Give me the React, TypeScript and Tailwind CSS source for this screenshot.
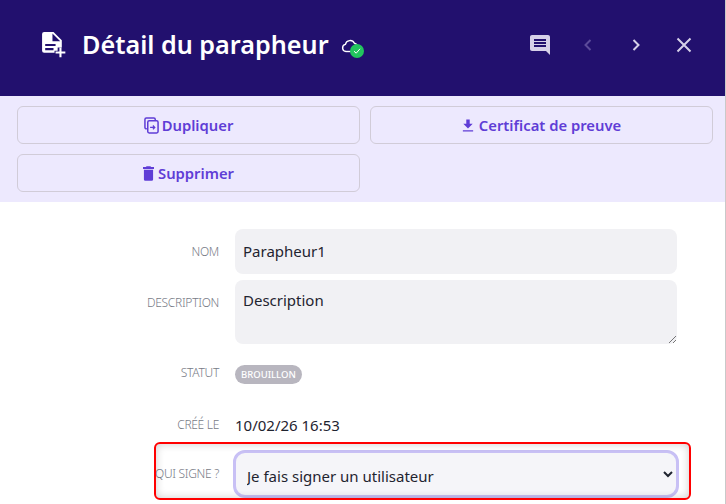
const font = { fontFamily: '"Noto Sans", "Open Sans", sans-serif' };

function FileSignIcon() {
  return (
    <svg width="25" height="27" viewBox="0 0 24 26" fill="#fff">
      <path d="M3 0h9l8 8v7h-4v3h-3v2H3a2 2 0 0 1-2-2V2a2 2 0 0 1 2-2zm8 1.500V9h7.500z" fillRule="evenodd" />
      <path d="M4 11.500h10v2H4zM4 15.500h8v2H4z" fill="#22106e" />
      <path d="M17.700 15h2v3.700h3.700v2h-3.700v3.700h-2v-3.700H14v-2h3.700z" />
    </svg>
  );
}

function CloudCheck() {
  return (
    <span className="relative inline-block w-[24px] h-[20px] ml-[12px] mt-[5px]">
      <svg width="20" height="16" viewBox="0 0 20 16" fill="none" stroke="#fff" strokeWidth="1.400" className="absolute left-0 top-0">
        <path d="M5 13.500a3.600 3.600 0 0 1-.6-7.100 4.800 4.800 0 0 1 9-1.200 3.800 3.800 0 0 1 3 5" />
        <path d="M5 13.500h6" />
      </svg>
      <span className="absolute left-[9px] top-[6px] w-[14px] h-[14px] rounded-full bg-[#22c55e] flex items-center justify-center">
        <svg width="8" height="8" viewBox="0 0 8 8" fill="none" stroke="#fff" strokeWidth="1">
          <path d="M1 4.200 3.200 6.200 7 1.800" />
        </svg>
      </span>
    </span>
  );
}

function ActionButton({ icon, label }: { icon: React.ReactNode; label: string }) {
  return (
    <button className="h-[38px] rounded-md border border-[#d1ccd8] flex items-center justify-center text-[#5f3dd6] text-[14.800px] font-semibold">
      {icon}
      <span>{label}</span>
    </button>
  );
}

function Row({ label, className, labelClass, children }: { label: string; className?: string; labelClass?: string; children: React.ReactNode }) {
  return (
    <div className={`flex ${className ?? ''}`}>
      <div className={`w-[219px] text-right text-[12px] tracking-[-0.3px] text-[#777b86] font-light uppercase shrink-0 ${labelClass ?? ''}`}>{label}</div>
      <div className="ml-4 w-[442px]">{children}</div>
    </div>
  );
}

export default function App() {
  return (
    <div className="w-[726px] h-[504px] overflow-hidden bg-white relative border-r border-[#c9c9c9]" style={font}>
      <header className="h-[96px] bg-[#22106e] flex items-center pl-[41px] pr-[29px] pb-[6px]">
        <FileSignIcon />
        <h1 className="ml-[16px] text-white text-[25.200px] font-semibold leading-none">Détail du parapheur</h1>
        <CloudCheck />
        <div className="ml-auto flex items-center text-[#d6d0e8] gap-[24px]">
          <svg width="24" height="24" viewBox="0 0 24 24" fill="currentColor">
            <path d="M21.990 4c0-1.100-.89-2-1.990-2H4c-1.100 0-2 .9-2 2v12c0 1.100.9 2 2 2h14l4 4-.01-18zM18 14H6v-2h12v2zm0-3H6V9h12v2zm0-3H6V6h12v2z" />
          </svg>
          <svg width="24" height="24" viewBox="0 0 24 24" fill="none" stroke="#5b4a9a" strokeWidth="2">
            <path d="M14.500 7 9.500 12l5 5" />
          </svg>
          <svg width="24" height="24" viewBox="0 0 24 24" fill="none" stroke="currentColor" strokeWidth="2">
            <path d="M9.500 7l5 5-5 5" />
          </svg>
          <svg width="24" height="24" viewBox="0 0 24 24" fill="none" stroke="currentColor" strokeWidth="2">
            <path d="M5.500 5.500l13 13M18.500 5.500l-13 13" />
          </svg>
        </div>
      </header>

      <div className="h-[106px] bg-[#ede9fe] pl-[17px] pr-[12px] pt-[10px] grid grid-cols-2 gap-x-[10px] gap-y-[10px] content-start">
        <ActionButton
          label="Dupliquer"
          icon={
            <svg width="15" height="17" viewBox="0 0 16 18" fill="none" stroke="currentColor" strokeWidth="1.600" className="mr-[3px]">
              <path d="M12 3V2.500A1.500 1.500 0 0 0 10.500 1H2.500A1.500 1.500 0 0 0 1 2.500V11a1.500 1.500 0 0 0 1.500 1.500H3" />
              <rect x="4" y="4" width="11" height="13" rx="1.500" />
              <path d="M6.500 11h5M9.500 9l2 2-2 2" strokeWidth="1.300" />
            </svg>
          }
        />
        <ActionButton
          label="Certificat de preuve"
          icon={
            <svg width="12" height="15" viewBox="0 0 14 16" fill="currentColor" className="mr-[5px]">
              <path d="M5 1h4v5h3.500L7 11.500 1.500 6H5zM1 13.500h12V15H1z" />
            </svg>
          }
        />
        <ActionButton
          label="Supprimer"
          icon={
            <svg width="11" height="15" viewBox="0 0 12 16" fill="currentColor" className="mr-[4px]">
              <path d="M4 0h4l1 1h3v2H0V1h3zM1 4h10v10.500A1.500 1.500 0 0 1 9.500 16h-7A1.500 1.500 0 0 1 1 14.500z" />
            </svg>
          }
        />
      </div>

      <div className="pt-[27px] text-[15px] text-[#1f2430]">
        <Row label="Nom" className="h-[51px]" labelClass="pt-[14px]">
          <div className="h-[45px] bg-[#f1f1f4] rounded-lg flex items-center px-2">Parapheur1</div>
        </Row>
        <Row label="Description" className="h-[65px]" labelClass="pt-[14px]">
          <div className="h-[64px] bg-[#f1f1f4] rounded-lg px-2 pt-[9px] leading-[22px] relative">
            Description
            <svg width="8" height="8" viewBox="0 0 8 8" stroke="#555" strokeWidth="0.800" className="absolute right-[1px] bottom-[1px]">
              <path d="M1 8 8 1M5 8l3-3" />
            </svg>
          </div>
        </Row>
        <Row label="Statut" className="mt-[18px] h-[19px] items-center">
          <span className="inline-flex h-[19px] items-center px-[6px] rounded-full bg-[#b8b6bf] text-white text-[9.500px] font-medium">BROUILLON</span>
        </Row>
        <Row label="Créé le" className="mt-[32px] h-[22px] items-center">
          10/02/26 16:53
        </Row>
        <Row label="Qui signe ?" className="mt-[14px] items-center">
          <select
            defaultValue="u"
            className="w-[446px] h-[48px] -ml-[2px] rounded-xl border-[3px] border-[#c8c0f5] bg-[#f5f5f9] pl-[7px] pr-[1px] pt-[4px] outline-none appearance-auto"
          >
            <option value="u">Je fais signer un utilisateur</option>
          </select>
        </Row>
      </div>

      {/* annotation drawn over the screenshot */}
      <div className="absolute left-[154px] top-[442px] w-[537px] h-[58px] rounded-md border-2 border-[#ff0000] pointer-events-none shadow-[inset_0_0_8px_rgba(0,0,0,0.2)]" />
    </div>
  );
}
